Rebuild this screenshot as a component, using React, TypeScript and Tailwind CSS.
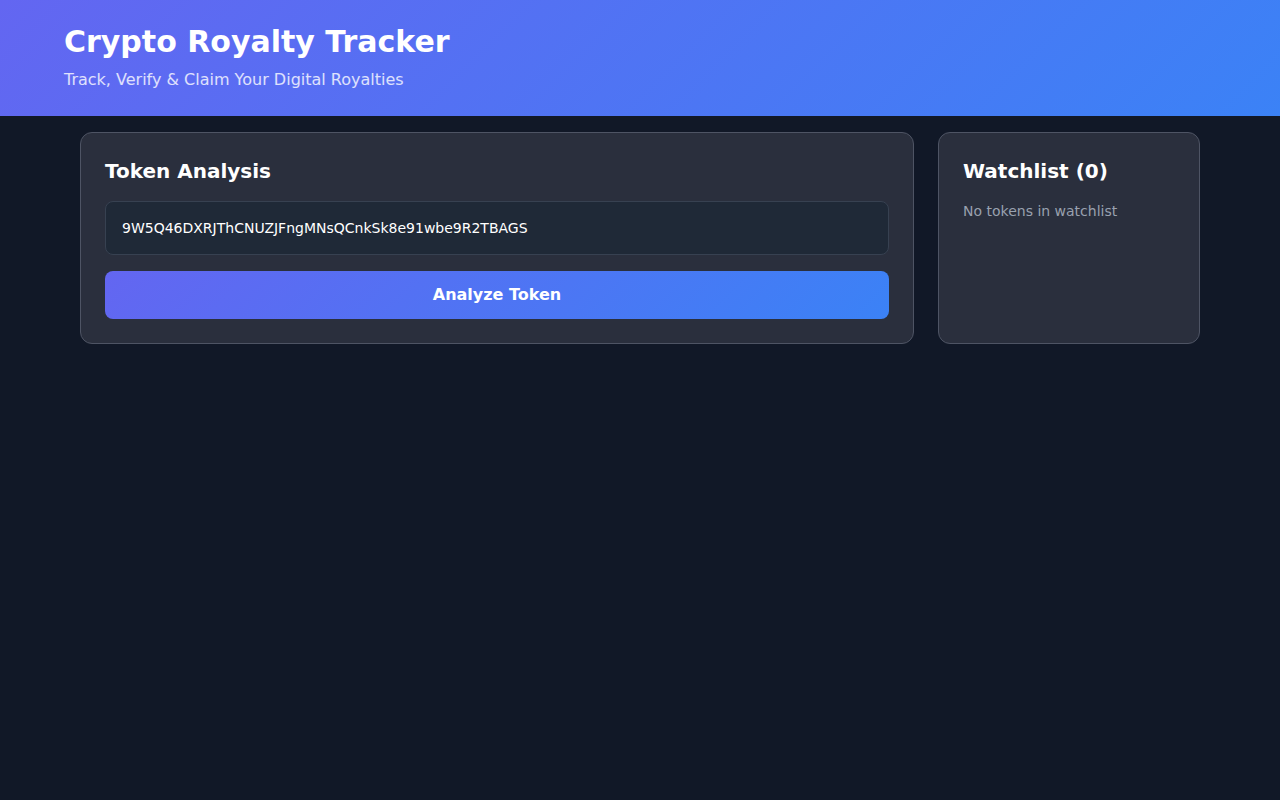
import React from "react";

export default function App() {
  return (
    <div className="min-h-screen bg-[#111827] text-white" style={{ fontFamily: '"DejaVu Sans", sans-serif' }}>
      <header className="bg-[linear-gradient(135deg,#6366f1_0%,#3b82f6_100%)]">
        <div className="px-16 py-6">
          <h1 className="text-3xl font-bold text-white">Crypto Royalty Tracker</h1>
          <p className="mt-2 text-base text-white/80">Track, Verify &amp; Claim Your Digital Royalties</p>
        </div>
      </header>
      <main className="mx-auto max-w-6xl px-4 py-4">
        <div className="grid grid-cols-4 gap-6 items-start">
          <section className="col-span-3 rounded-xl border border-[#4e5464] bg-[#2a2f3d] p-6">
            <h2 className="mb-4 text-xl font-bold text-white">Token Analysis</h2>
            <input
              type="text"
              defaultValue="9W5Q46DXRJThCNUZJFngMNsQCnkSk8e91wbe9R2TBAGS"
              className="block w-full rounded-lg border border-[#374151] bg-[#1f2937] px-4 py-4 text-sm text-white outline-none"
            />
            <button className="mt-4 w-full rounded-lg bg-[linear-gradient(135deg,#6366f1_0%,#3b82f6_100%)] py-3 text-base font-bold text-white">
              Analyze Token
            </button>
          </section>
          <aside className="col-span-1 h-[212px] rounded-xl border border-[#4e5464] bg-[#2a2f3d] p-6">
            <h2 className="mb-4 text-xl font-bold text-white">Watchlist (0)</h2>
            <p className="text-sm text-gray-400">No tokens in watchlist</p>
          </aside>
        </div>
      </main>
    </div>
  );
}
